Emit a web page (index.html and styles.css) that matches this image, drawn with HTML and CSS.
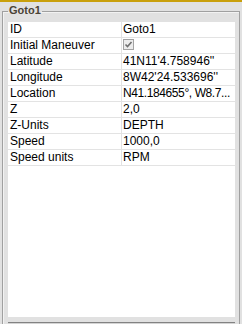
FILE: index.html
```html
<!DOCTYPE html>
<html lang="en">
<head>
    <meta charset="UTF-8">
    <title>Goto1</title>
    <link rel="stylesheet" href="styles.css">
</head>
<body>
    <div class="top-bar"></div>
    <fieldset class="group">
        <legend class="group-title">Goto1</legend>
        <div class="grid">
            <div class="row"><span class="key">ID</span><span class="val">Goto1</span></div>
            <div class="row">
                <span class="key">Initial Maneuver</span>
                <span class="val">
                    <svg class="check" width="11" height="11" viewBox="0 0 11 11">
                        <rect x="0.5" y="0.5" width="10" height="10" fill="#ececec" stroke="#a3a3a3"/>
                        <path d="M2.5 5.5 L4.5 7.5 L8.5 3" fill="none" stroke="#6f6f6f" stroke-width="1.6"/>
                    </svg>
                </span>
            </div>
            <div class="row"><span class="key">Latitude</span><span class="val">41N11'4.758946''</span></div>
            <div class="row"><span class="key">Longitude</span><span class="val">8W42'24.533696''</span></div>
            <div class="row"><span class="key">Location</span><span class="val tight">N41.184655°, W8.7...</span></div>
            <div class="row"><span class="key">Z</span><span class="val">2,0</span></div>
            <div class="row"><span class="key">Z-Units</span><span class="val">DEPTH</span></div>
            <div class="row"><span class="key">Speed</span><span class="val">1000,0</span></div>
            <div class="row"><span class="key">Speed units</span><span class="val">RPM</span></div>
        </div>
        <div class="hscroll"></div>
    </fieldset>
</body>
</html>
```

FILE: styles.css
```css
* {
    box-sizing: content-box;
}

html, body {
    margin: 0;
    padding: 0;
    height: 100%;
    overflow: hidden;
}

body {
    background-color: #e1e1e1;
    font-family: 'Liberation Sans', Arial, sans-serif;
}

.top-bar {
    height: 2px;
    background-color: #c9a00c;
}

.group {
    margin: 2px 2px 0;
    padding: 3px 4px 0 5px;
    border: 1px solid #a0a0a0;
    border-bottom: none;
    min-width: 0;
    box-shadow: inset 1px 1px 0 #f2f2f2;
}

.group-title {
    padding: 0 1px 2px;
    font-size: 11px;
    font-weight: bold;
    line-height: 13px;
    color: #4b4336;
}

.grid {
    background-color: #fff;
    height: 295px;
}

.row {
    display: flex;
    height: 15px;
    border-bottom: 1px solid #e3e3e3;
    font-size: 12px;
    line-height: 15px;
    color: #000;
}

.key {
    width: 111px;
    padding-left: 2px;
    border-right: 1px solid #e3e3e3;
    white-space: nowrap;
}

.val {
    flex: 1;
    padding-left: 1px;
    white-space: nowrap;
    overflow: hidden;
}

.val.tight {
    letter-spacing: -0.4px;
}

.check {
    display: block;
    margin-top: 1px;
}

.hscroll {
    margin-top: 5px;
    height: 3px;
    border-top: 1px solid #828282;
    background-color: #d4d4d4;
}
```
